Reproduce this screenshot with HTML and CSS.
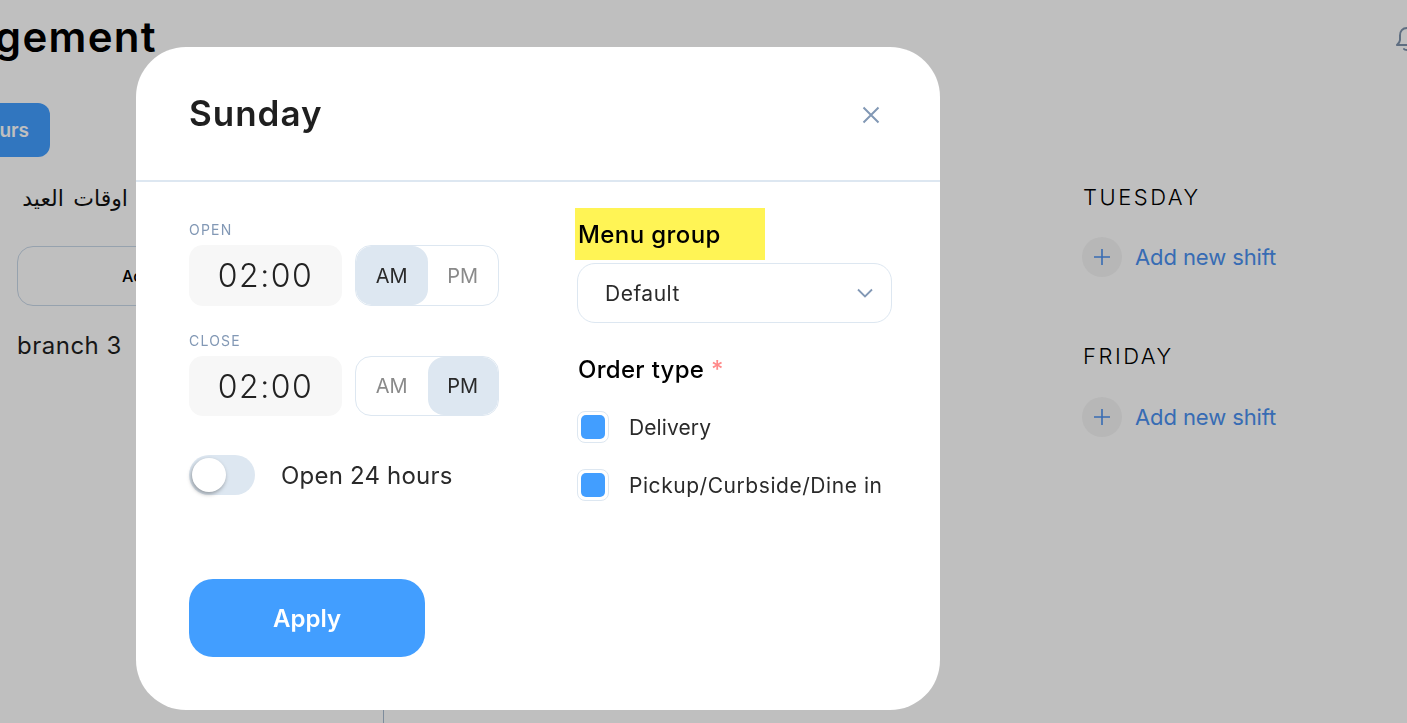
FILE: index.html
```html
<!DOCTYPE html>
<html lang="en">
<head>
<meta charset="utf-8">
<title>Branch Management</title>
<link rel="stylesheet" href="styles.css">
</head>
<body>
<div class="page">
  <header class="top">
    <h1 class="page-title">Management</h1>
    <svg class="bell" viewBox="0 0 24 26" width="24" height="26" fill="none" stroke="#7f93ad" stroke-width="2" stroke-linejoin="round" stroke-linecap="round"><path d="M12 2c-4.500 0-7 3.200-7 7.500v4.500c0 2-1.500 3.500-3 5h20c-1.500-1.500-3-3-3-5V9.500C19 5.200 16.500 2 12 2z"/><path d="M9 23c.8 1.300 5.200 1.300 6 0"/></svg>
  </header>
  <div class="tabs"><button class="hours-btn">Hours</button></div>
  <div class="content">
    <aside class="side">
      <div class="arabic" dir="rtl" lang="ar">اوقات العيد</div>
      <div class="add-box"><span>Add</span></div>
      <div class="branch">branch 3</div>
    </aside>
    <section class="days">
      <div class="day"><h3 class="day-name">TUESDAY</h3><div class="shift"><span class="plus"><svg viewBox="0 0 18 18" width="18" height="18"><path d="M9 1v16M1 9h16" stroke="#4a90f0" stroke-width="1.600"/></svg></span><span class="shift-text">Add new shift</span></div></div>
      <div class="day"><h3 class="day-name">FRIDAY</h3><div class="shift"><span class="plus"><svg viewBox="0 0 18 18" width="18" height="18"><path d="M9 1v16M1 9h16" stroke="#4a90f0" stroke-width="1.600"/></svg></span><span class="shift-text">Add new shift</span></div></div>
    </section>
  </div>
</div>

<div class="overlay">
  <div class="modal">
    <div class="modal-head">
      <h2 class="modal-title">Sunday</h2>
      <svg class="close" viewBox="0 0 18 18" width="18" height="18"><path d="M1.500 1.500l15 15M16.500 1.500l-15 15" stroke="#8298b5" stroke-width="2"/></svg>
    </div>
    <div class="modal-body">
      <div class="col-left">
        <div class="time-label">OPEN</div>
        <div class="time-row">
          <div class="time-input">02:00</div>
          <div class="ampm">
            <span class="seg seg-on">AM</span>
            <span class="seg">PM</span>
          </div>
        </div>
        <div class="time-label label-close">CLOSE</div>
        <div class="time-row time-row-close">
          <div class="time-input">02:00</div>
          <div class="ampm">
            <span class="seg">AM</span>
            <span class="seg seg-on">PM</span>
          </div>
        </div>
        <div class="toggle-row">
          <span class="toggle"><span class="knob"></span></span>
          <span class="toggle-text">Open 24 hours</span>
        </div>
        <button class="apply">Apply</button>
      </div>
      <div class="col-right">
        <div class="highlight">Menu group</div>
        <div class="select">
          <span>Default</span>
          <svg viewBox="0 0 16 10" width="16" height="10" fill="none"><path d="M1 1.500l7 7 7-7" stroke="#8298b5" stroke-width="1.800"/></svg>
        </div>
        <div class="order-title">Order type <span class="req">*</span></div>
        <div class="check-row"><span class="check"><span class="check-fill"></span></span><span class="check-text">Delivery</span></div>
        <div class="check-row"><span class="check"><span class="check-fill"></span></span><span class="check-text check-text-long">Pickup/Curbside/Dine in</span></div>
      </div>
    </div>
  </div>
</div>
</body>
</html>
```
FILE: styles.css
```css
* { box-sizing: border-box; }
html, body { margin: 0; height: 100%; overflow: hidden; }
body { font-family: Inter, "Noto Sans", "Liberation Sans", sans-serif; color: #1f1f1f; background: #fff; }

.page { height: 723px; overflow: hidden; }
.top { display: flex; justify-content: space-between; align-items: center; height: 76px; margin: 0 -12px 0 -123px; }
.page-title { margin: -2px 0 0; font-size: 42px; line-height: 74px; letter-spacing: 1.300px; font-weight: 600; color: #000; }
.bell { margin-top: 2px; }
.tabs { margin-top: 27px; height: 54px; margin-left: -70px; }
.hours-btn { width: 120px; height: 54px; border: 0; border-radius: 12px; background: #429eff; color: #fff; font: 600 19px Inter, sans-serif; text-align: right; padding-right: 21px; }
.content { display: flex; height: 566px; }
.side { width: 384px; flex: none; padding: 30px 0 0 17px; border-right: 1px solid #a9bbd0; }
.arabic { width: 111px; font-family: "Liberation Serif", "DejaVu Sans", serif; font-size: 22px; line-height: 24px; height: 28px; color: #111; letter-spacing: 1px; word-spacing: 4px; white-space: nowrap; }
.add-box { margin-top: 31px; width: 340px; height: 60px; border: 1px solid #c9d8e8; border-radius: 16px; font-size: 16px; font-weight: 500; display: flex; align-items: center; color: #000; padding-left: 104px; }
.branch { margin-top: 24px; font-size: 24px; line-height: 32px; letter-spacing: .5px; color: #1f1f1f; }
.days { flex: 1; display: grid; grid-template-columns: 300px; grid-auto-rows: 159px; padding: 25px 0 0 699px; }
.day-name { margin: 0; font-size: 22px; line-height: 30px; font-weight: 300; letter-spacing: 2.500px; color: #000; }
.shift { display: flex; align-items: center; gap: 13px; margin-top: 25px; margin-left: -1px; }
.day + .day .shift { margin-top: 26px; }
.plus { width: 40px; height: 40px; border-radius: 50%; background: #f5f5f5; display: flex; align-items: center; justify-content: center; flex: none; }
.shift-text { font-size: 22px; letter-spacing: -.1px; color: #4a90f0; }

.overlay { position: fixed; inset: 0; background: rgba(0,0,0,.25); padding: 47px 0 0 136px; }
.modal { width: 804px; height: 663px; background: #fff; border-radius: 50px; overflow: hidden; }
.modal-head { height: 135px; border-bottom: 2px solid #dde7f1; display: flex; justify-content: space-between; align-items: center; padding: 0 60px 0 53px; }
.modal-title { margin: 0 0 1px; font-size: 35px; line-height: 44px; letter-spacing: 1px; font-weight: 600; color: #1f1f1f; }
.close { margin-top: 3px; }
.modal-body { display: flex; padding: 36px 0 0 53px; }
.col-left { width: 388px; flex: none; }
.time-label { font-size: 14px; line-height: 20px; letter-spacing: 1.200px; color: #8298b5; height: 20px; margin-top: 2px; margin-bottom: 5px; }
.label-close { margin-top: 25px; margin-bottom: 5px; }
.time-row { display: flex; gap: 13px; height: 61px; }
.time-row-close { height: 60px; }
.time-input { width: 153px; border-radius: 14px; background: #f7f7f7; display: flex; align-items: center; justify-content: center; font-size: 32px; font-weight: 300; letter-spacing: 1.500px; color: #222; }
.ampm { width: 144px; display: flex; border: 1px solid #dde7f1; border-radius: 16px; overflow: hidden; }
.seg { display: flex; align-items: center; justify-content: center; font-size: 20px; color: #8a8a8a; border-radius: 16px; width: 71px; }
.seg:first-child { width: 72px; }
.seg-on { background: #dde7f1; color: #2a2a2a; }
.toggle-row { display: flex; align-items: center; gap: 26px; margin-top: 39px; }
.toggle { width: 66px; height: 40px; border-radius: 20px; background: #dde7f1; padding: 3px; flex: none; display: block; }
.knob { display: block; width: 34px; height: 34px; border-radius: 50%; background: #fff; box-shadow: -1px 2px 4px rgba(0,0,0,.35); }
.toggle-text { font-size: 24px; letter-spacing: .2px; color: #2a2a2a; }
.apply { display: block; margin-top: 84px; width: 236px; height: 78px; border: 0; border-radius: 24px; background: #429eff; color: #fff; font: 600 24px Inter, sans-serif; }
.col-right { width: 316px; flex: none; margin-top: -10px; }
.highlight { width: 190px; height: 52px; margin-left: -2px; padding: 12px 0 0 3px; background: #fff455; font-size: 24px; line-height: 30px; letter-spacing: .4px; font-weight: 500; color: #000; }
.select { margin-top: 3px; height: 60px; width: 315px; border: 1px solid #dde7f1; border-radius: 18px; display: flex; align-items: center; justify-content: space-between; padding: 0 18px 0 27px; font-size: 21px; letter-spacing: .5px; color: #2a2a2a; }
.order-title { margin: 30px 0 0 1px; font-size: 24px; line-height: 34px; letter-spacing: .3px; font-weight: 500; color: #000; }
.req { color: #ff8a8a; }
.check-row { display: flex; align-items: center; gap: 20px; height: 32px; margin-top: 26px; }
.order-title + .check-row { margin-top: 24px; }
.check { width: 32px; height: 32px; border: 1px solid #dde7f1; border-radius: 8px; padding: 3px; flex: none; display: block; }
.check-fill { display: block; width: 24px; height: 24px; border-radius: 5px; background: #429eff; }
.check-text { font-size: 21px; letter-spacing: .1px; color: #2a2a2a; white-space: nowrap; }
.check-text-long { letter-spacing: .55px; }
```
